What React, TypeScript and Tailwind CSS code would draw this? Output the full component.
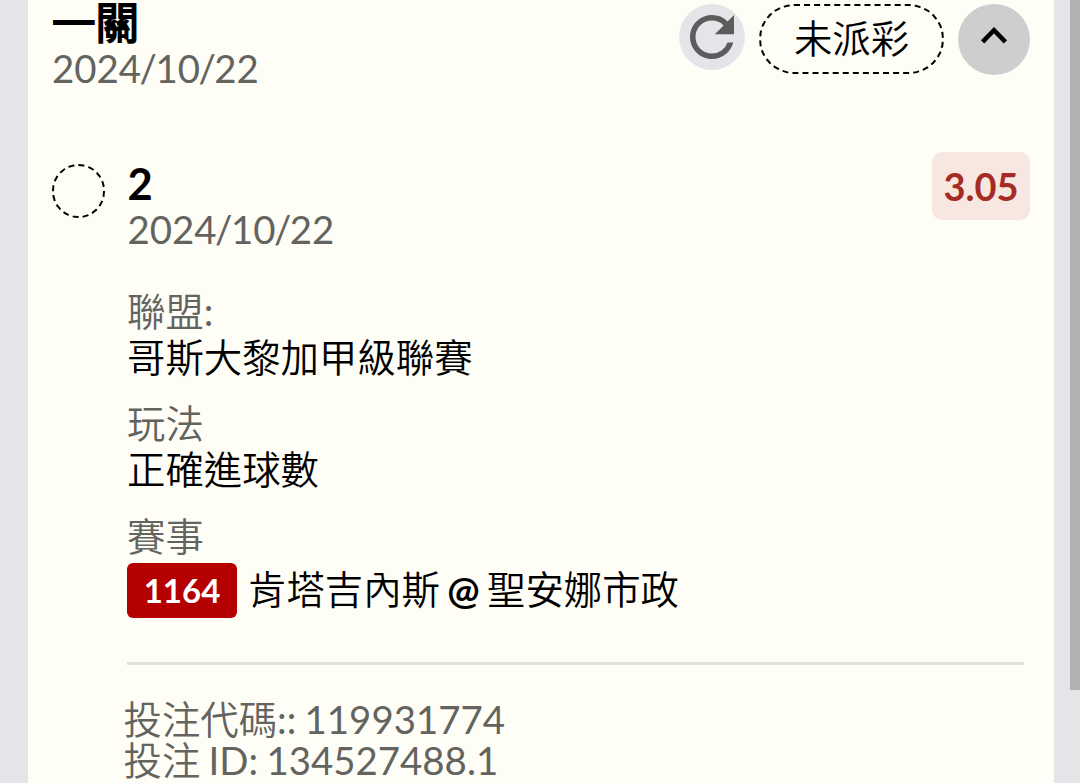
import { MdRefresh } from "react-icons/md";

const details = [
  { label: "聯盟:", value: "哥斯大黎加甲級聯賽" },
  { label: "玩法", value: "正確進球數" },
];

function BetDate({ value }: { value: string }) {
  const [year, month, day] = value.split("/");

  return (
    <div className="h-[46px] leading-[46px] text-[#63635f]">
      {year}
      <span className="-mx-[1.5px]">/</span>
      {month}
      <span className="-mx-[1.5px]">/</span>
      {day}
    </div>
  );
}

function Detail({ label, value }: { label: string; value: string }) {
  return (
    <div className="mb-[20px]">
      <div className="h-[46px] leading-[46px] text-[#63635f]">{label}</div>
      <div className="h-[46px] leading-[46px] text-black">{value}</div>
    </div>
  );
}

export default function App() {
  return (
    <div className="flex h-[783px] w-[1080px] overflow-hidden bg-[#e4e5e8] font-['Lato','Noto_Sans_CJK_TC_DemiLight','Noto_Sans_CJK_TC',sans-serif] text-[38.4px]">
      <main className="ml-[28px] h-full w-[1026px] shrink-0 bg-[#fffef6] pr-[24px] pl-[24px]">
        {/* Header */}
        <header className="flex h-[152px] items-start">
          <div className="flex-1">
            <h1 className="h-[45px] text-[43.5px] leading-[44px] font-normal text-black [-webkit-text-stroke:1.9px_black]">
              一關
            </h1>
            <BetDate value="2024/10/22" />
          </div>
          <button className="mt-[4px] flex size-[66px] items-center justify-center rounded-full bg-[#e4e5e8] text-[#5c5c5c]">
            <MdRefresh size={66} />
          </button>
          <div className="mt-[4px] ml-[14px] flex h-[70px] w-[185px] items-center justify-center rounded-full border-2 border-dashed border-black pb-[3px] leading-[46px] text-black">
            未派彩
          </div>
          <button className="mt-[4px] ml-[14px] flex h-[71px] w-[72px] items-center justify-center rounded-full bg-[#cecece]">
            <svg
              className="-mt-[7px]"
              width="30"
              height="20"
              viewBox="0 0 30 20"
              fill="none"
              stroke="black"
              strokeWidth="4.6"
            >
              <path d="M3.6 15.8L15 4.2L26.4 15.8" />
            </svg>
          </button>
        </header>

        {/* Selection */}
        <section className="flex">
          <div className="mt-[12px] h-[54px] w-[53px] shrink-0 rounded-full border-2 border-dashed border-black" />
          <div className="ml-[22px] flex-1">
            <div className="flex h-[136px] items-start justify-between">
              <div className="pt-[8px] pl-[0.5px]">
                <div className="h-[46px] text-[43.5px] leading-[46px] font-bold text-black">
                  2
                </div>
                <BetDate value="2024/10/22" />
              </div>
              <div className="flex h-[68px] w-[98px] items-center justify-center rounded-[10px] bg-[#f7e7e0] text-[38px] font-bold text-[#a52c24]">
                3.05
              </div>
            </div>

            {details.map((item) => (
              <Detail key={item.label} label={item.label} value={item.value} />
            ))}

            <div className="h-[51px] pt-[1px] leading-[46px] text-[#63635f]">
              賽事
            </div>
            <div className="flex h-[55px] items-center text-black">
              <span className="flex h-[55px] w-[110px] items-center justify-center rounded-[6px] bg-[#b40000] text-[33px] font-bold text-white">
                1164
              </span>
              <span className="-mt-[2px] ml-[11px] whitespace-nowrap [word-spacing:-2.5px]">
                肯塔吉內斯 <b>@</b> 聖安娜市政
              </span>
            </div>

            <div className="mt-[44px] mr-[6px] h-[3px] bg-[#e2e2dc]" />

            <footer className="mt-[34px] -ml-[3.5px] leading-[41px] text-[#63635f] [word-spacing:-1.5px]">
              <div>投注代碼:: 119931774</div>
              <div>投注 ID: 134527488.1</div>
            </footer>
          </div>
        </section>
      </main>

      {/* Scrollbar */}
      <div className="ml-auto h-[690px] w-[10px] bg-[#b1b1b1]" />
    </div>
  );
}
